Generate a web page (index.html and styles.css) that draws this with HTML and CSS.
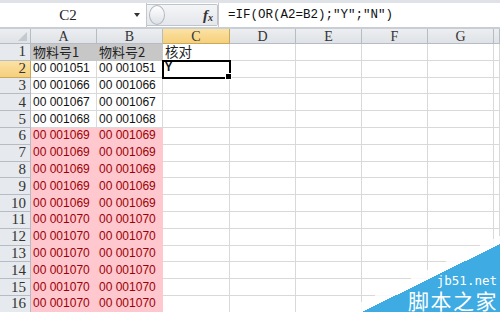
FILE: index.html
```html
<!DOCTYPE html>
<html lang="zh-CN">
<head>
    <meta charset="UTF-8">
    <meta name="viewport" content="width=device-width, initial-scale=1.0">
    <title>核对物料号</title>
    <link rel="stylesheet" href="styles.css">
</head>
<body>
    <div class="fbar">
        <div class="namebox">
            <span class="name">C2</span>
            <span class="drop"></span>
        </div>
        <div class="grip">
            <span class="knob"></span>
            <span class="fx">f<sub>x</sub></span>
        </div>
        <div class="formula">=IF(OR(A2=B2);"Y";"N")</div>
    </div>

    <div class="sheet" id="sheet">
        <!-- Cells will be generated here -->
    </div>

    <div class="mark">
        <div class="mark-white"></div>
        <div class="mark-blue"></div>
        <div class="mark-text">
            <span class="mark-url">jb51.net</span>
            <span class="mark-name">脚本之家</span>
        </div>
    </div>

    <script>
        // Sheet contents: columns A, B, C
        const rows = [
            ['物料号1', '物料号2', '核对'],
            ['00 001051', '00 001051', 'Y'],
            ['00 001066', '00 001066', ''],
            ['00 001067', '00 001067', ''],
            ['00 001068', '00 001068', '']
        ];
        for (let i = 0; i < 5; i++) rows.push(['00 001069', '00 001069', '']);
        for (let i = 0; i < 6; i++) rows.push(['00 001070', '00 001070', '']);

        const cols = ['A', 'B', 'C', 'D', 'E', 'F', 'G', ''];
        const sheet = document.getElementById('sheet');

        let html = '<div class="hd corner"></div>';
        cols.forEach(function (c) {
            html += `<div class="hd col${c === 'C' ? ' on' : ''}">${c}</div>`;
        });

        rows.forEach(function (r, i) {
            const n = i + 1;
            html += `<div class="hd row${n === 2 ? ' on' : ''}">${n}</div>`;
            for (let j = 0; j < cols.length; j++) {
                let cls = 'cell';
                const text = r[j] || '';
                if (n === 1 && j < 2) cls += ' title';
                if (n >= 6 && j < 2) cls += ' dup';
                if (n === 1 && j === 2) cls += ' cjk';
                if (n === 2 && j === 2) cls += ' sel';
                html += `<div class="${cls}">${text}</div>`;
            }
        });

        sheet.innerHTML = html;
    </script>
</body>
</html>
```

FILE: styles.css
```css
body {
    margin: 0;
    width: 500px;
    height: 312px;
    overflow: hidden;
    background-color: #fff;
    font-family: Arial, "Liberation Sans", "Noto Sans CJK SC", sans-serif;
    position: relative;
}
.fbar {
    display: flex;
    height: 29px;
    box-sizing: border-box;
    border-top: 3px solid #dfe3e8;
    border-bottom: 2px solid #c9ced5;
    background-color: #fff;
}
.namebox {
    width: 146px;
    display: flex;
    align-items: center;
    border-right: 1px solid #c4c8ce;
}
.name {
    flex: 1;
    text-align: center;
    font-family: "Liberation Serif", "Noto Sans CJK SC", serif;
    font-size: 15px;
    color: #222;
    padding-left: 2px;
}
.drop {
    width: 0;
    height: 0;
    border-left: 3px solid transparent;
    border-right: 3px solid transparent;
    border-top: 4px solid #333;
    margin-right: 6px;
}
.grip {
    width: 70px;
    display: flex;
    align-items: center;
    justify-content: space-between;
    margin: 1px 0;
    border: 1px solid #bfc4cb;
    border-left: none;
    border-radius: 0 2px 2px 0;
    background: linear-gradient(#f4f5f7, #e4e7eb);
}
.knob {
    width: 14px;
    height: 18px;
    margin-left: 2px;
    border: 1px solid #b4b9c0;
    border-radius: 50%;
    background: linear-gradient(#ffffff, #dde1e6);
}
.fx {
    font-family: "Liberation Serif", serif;
    font-style: italic;
    font-weight: bold;
    font-size: 15px;
    color: #333;
    margin-right: 4px;
}
.fx sub {
    font-size: 10px;
    vertical-align: -1px;
}
.formula {
    flex: 1;
    display: flex;
    align-items: center;
    padding-left: 9px;
    font-family: "Liberation Mono", "Noto Sans CJK SC", monospace;
    font-size: 12.5px;
    color: #111;
    border-left: 1px solid #c4c8ce;
}
.sheet {
    display: grid;
    grid-template-columns: 31px 66px 66px 67px 66px 66px 66px 66px 1fr;
    grid-template-rows: 15px;
    grid-auto-rows: 16.8px;
}
.sheet > div {
    box-sizing: border-box;
    border-right: 1px solid #d9d9d9;
    border-bottom: 1px solid #d9d9d9;
    white-space: nowrap;
    line-height: 15px;
}
.sheet > .hd {
    background: linear-gradient(#eceef1, #dfe2e6);
    border-color: #b6bcc4;
    color: #333;
    font-family: "Liberation Serif", "Noto Sans CJK SC", serif;
    font-size: 14px;
    display: flex;
    align-items: center;
    justify-content: center;
}
.sheet > .hd.row {
    background: #e6e9ed;
    justify-content: flex-end;
    padding-right: 4px;
    font-size: 15px;
}
.sheet > .hd.on {
    background: linear-gradient(#fbe2a4, #f6cf7c);
    border-color: #c9a95c;
}
.sheet > .corner {
    position: relative;
}
.corner::after {
    content: "";
    position: absolute;
    right: 3px;
    bottom: 2px;
    border-left: 9px solid transparent;
    border-bottom: 9px solid #c4c9d0;
}
.cell {
    display: flex;
    align-items: center;
    padding-left: 2px;
    font-size: 12px;
    color: #111;
}
.sheet > .title {
    background-color: #c7c7c7;
    border-color: #c7c7c7;
    font-family: "Noto Sans CJK SC", sans-serif;
    font-size: 13px;
    color: #222;
}
.sheet > .cjk {
    font-family: "Noto Sans CJK SC", sans-serif;
    font-size: 13.5px;
    color: #222;
}
.sheet > .dup {
    background-color: #ffc7ce;
    border-color: #ffc7ce;
    color: #9c0006;
}
.sheet > .sel {
    position: relative;
    outline: 2px solid #000;
    outline-offset: -1px;
    font-family: "Liberation Mono", monospace;
    font-weight: bold;
    font-size: 12px;
    z-index: 1;
}
.sel::after {
    content: "";
    position: absolute;
    right: -3px;
    bottom: -3px;
    width: 5px;
    height: 5px;
    background-color: #000;
    border: 1px solid #fff;
}
.mark {
    position: absolute;
    right: 0;
    bottom: 0;
    width: 160px;
    height: 80px;
    z-index: 2;
}
.mark-white {
    position: absolute;
    left: 0;
    top: 4px;
    width: 160px;
    height: 76px;
    background: linear-gradient(to bottom right, transparent 50%, rgba(255, 255, 255, 0.85) 50%);
}
.mark-blue {
    position: absolute;
    left: 22px;
    top: 12px;
    width: 138px;
    height: 68px;
    background: linear-gradient(to bottom right, transparent 50%, #3eabe2 50%);
}
.mark-text {
    position: absolute;
    right: 2px;
    bottom: 0;
    display: flex;
    flex-direction: column;
    align-items: flex-end;
    color: #fff;
}
.mark-url {
    line-height: 15px;
    margin-right: 1px;
    font-family: "DejaVu Sans Mono", monospace;
    font-size: 12.5px;
}
.mark-name {
    line-height: 24px;
    font-family: "Noto Sans CJK SC", sans-serif;
    font-size: 21px;
    letter-spacing: 1.5px;
}
```
